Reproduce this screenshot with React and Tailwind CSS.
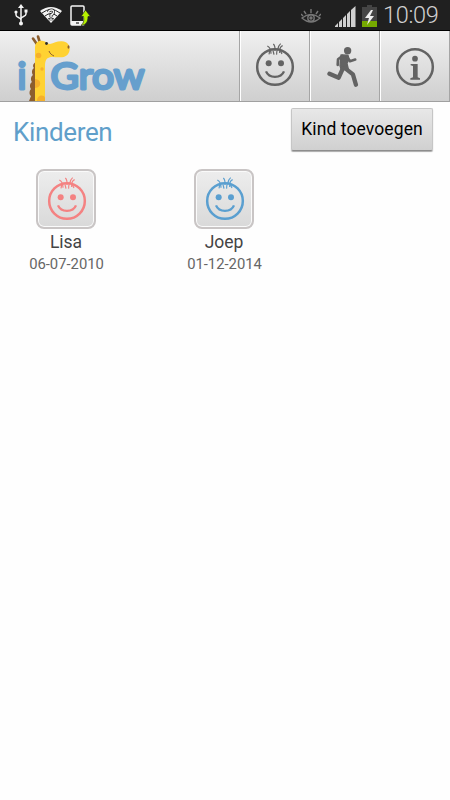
const children = [
  { name: 'Lisa', birthday: '06-07-2010', color: 'text-[#f48282]' },
  { name: 'Joep', birthday: '01-12-2014', color: 'text-[#5a9fd0]' },
];

const SmileyIcon = ({ className }) => (
  <svg viewBox="0 0 120 132" fill="none" stroke="currentColor" className={className}>
    <circle cx="60" cy="72" r="53.5" strokeWidth="7.5" />
    <circle cx="41" cy="61" r="9" fill="currentColor" stroke="none" />
    <circle cx="78" cy="61" r="9" fill="currentColor" stroke="none" />
    <path d="M33 85C42 107 78 107 87 85" strokeWidth="7" />
    <path
      d="M37 9C45 13 48 18 48 32M55 3C60 8 61 12 60 24M77 2C71 7 69 12 68 20M83 8C75 11 73 16 74 30M44 24C43 28 43 30 42 34M54 22C55 27 56 30 57 35M67 20C65 26 64 30 65 35M77 22C78 27 79 30 81 33"
      strokeWidth="3.5"
    />
  </svg>
);

const RunnerIcon = () => (
  <svg viewBox="0 0 96 124" fill="none" stroke="currentColor" strokeLinecap="round" strokeLinejoin="round" className="mr-1 h-[41px] w-8">
    <circle cx="62" cy="14" r="11" fill="currentColor" stroke="none" />
    <path d="M42 27L63 28L66 39L60 53L64 69L43 73L39 60Z" fill="currentColor" strokeWidth="4" />
    <path d="M47 30L33 40L32 57" strokeWidth="8" />
    <path d="M61 34L69 46L85 41" strokeWidth="8" />
    <path d="M47 69L35 96L7 84" strokeWidth="13" />
    <path d="M54 67L78 86L87 117" strokeWidth="13" />
  </svg>
);

const InfoIcon = () => (
  <svg viewBox="0 0 120 120" fill="none" stroke="currentColor" className="mt-0.5 size-10">
    <circle cx="60" cy="60" r="53.5" strokeWidth="7.5" />
    <circle cx="60" cy="35" r="8.5" fill="currentColor" stroke="none" />
    <path d="M47 51H68V91L75 94V98H46V94L54 91V57L47 55Z" fill="currentColor" stroke="none" />
  </svg>
);

const Logo = () => (
  <svg viewBox="0 0 160 70" className="h-[70px] w-40 shrink-0">
    {/* mane */}
    <path d="M36 31C32 33 33 36 34 37C31 39 32 43 33 44C30 46 31 50 32 51C29 53 30 57 31 58C29 60 29 64 31 65L29 70H40V31Z" fill="#8c5e2e" />
    {/* horns */}
    <path d="M33 7.5L37.5 14M38 5.5L40 12" stroke="#8c5e2e" strokeWidth="2.6" strokeLinecap="round" />
    {/* head and neck */}
    <path d="M35 70V17C35 11 39 9 43 10C46 10 47 13 50 13C54 12 57 10 61.5 10.2C67 10 70 14 69.7 18.7C69 24 65 26.5 60 26.3C55 26.5 53 25.5 50 26.2C46 27 45 30 45 36V70Z" fill="#ffd232" />
    <circle cx="38.5" cy="24.5" r="2.8" fill="#f5b02c" />
    <circle cx="42" cy="38" r="1.7" fill="#f5b02c" />
    <path d="M35 48C42 48 42 57 35 57ZM37 70C37 64 44 63 45 67V70Z" fill="#f5b02c" />
    <circle cx="46.5" cy="12.5" r="1.4" fill="#2b2b2b" />
    <ellipse cx="68.5" cy="16" rx="1" ry="1.7" fill="#8c5e2e" />
    <path d="M49 20C50 23 52 24 54 25" fill="none" stroke="#8c5e2e" strokeWidth="1" />
    <g fill="#669fcd" stroke="#669fcd" strokeLinejoin="round" strokeLinecap="round" fontFamily="Lato, sans-serif" fontWeight="400">
      <text x="17.5" y="57.5" fontSize="37" strokeWidth="2.8">i</text>
      <text x="50.5" y="57.5" fontSize="37" strokeWidth="2.8" textLength="94" lengthAdjust="spacingAndGlyphs">Grow</text>
    </g>
  </svg>
);

const StatusBar = () => (
  <div className="flex h-[31px] items-center border-b border-black bg-[#202020] pr-[11px] pl-3.5 text-[#d0d0d0]">
    {/* usb */}
    <svg viewBox="0 0 14 22" fill="none" stroke="#f4f4f4" strokeWidth="1.5" className="h-[22px] w-3.5">
      <path d="M7 3V19M2 8V11C2 14 7 13 7 16M12 7V10C12 13 7 12 7 15" />
      <path d="M7 0L10 4H4Z" fill="#f4f4f4" stroke="none" />
      <circle cx="7" cy="19.5" r="2" fill="#f4f4f4" stroke="none" />
      <circle cx="2" cy="8" r="1.6" fill="#f4f4f4" stroke="none" />
      <path d="M10.5 5.5h3v3h-3z" fill="#f4f4f4" stroke="none" />
    </svg>
    {/* wifi */}
    <svg viewBox="0 0 22 18" className="ml-3 h-[18px] w-[22px]">
      <path d="M0 5Q11 -3 22 5L11 17Z" fill="#f4f4f4" />
      <path d="M2 7Q11 0 20 7M5 10Q11 5 17 10M8 13Q11 10.5 14 13" fill="none" stroke="#202020" strokeWidth="1" />
      <path d="M8.5 6Q9 4 11.5 4Q14 4 13.5 6.5Q13 8 11 9V11M11 13V14.5" fill="none" stroke="#202020" strokeWidth="3" />
      <path d="M8.5 6Q9 4 11.5 4Q14 4 13.5 6.5Q13 8 11 9V11M11 13V14.5" fill="none" stroke="#f4f4f4" strokeWidth="1.5" />
    </svg>
    {/* phone update */}
    <svg viewBox="0 0 21 21" className="ml-2 h-[21px] w-[21px]">
      <rect x="1" y="1" width="13" height="19" rx="1" fill="none" stroke="#f4f4f4" strokeWidth="1.5" />
      <path d="M1 16H14V20H1Z" fill="#f4f4f4" />
      <path d="M6 18H9" stroke="#202020" strokeWidth="1.2" />
      <path d="M15.5 5L20.5 11.5H18C18 17 16 20 11 20.5C14 18 14 15 13.5 11.5H11Z" fill="#b4f000" stroke="#202020" strokeWidth=".7" />
    </svg>
    {/* smart stay */}
    <svg viewBox="0 0 20 16" fill="none" stroke="#777" strokeWidth="1.4" className="mt-1 ml-auto h-4 w-5">
      <path d="M1 9Q10 2 19 9Q10 17 1 9ZM10 4V0M5 5L3 2M15 5L17 2M2 7L0 5M18 7L20 5" />
      <circle cx="10" cy="9" r="3.2" />
      <circle cx="10" cy="9" r="1" fill="#777" />
    </svg>
    {/* signal */}
    <svg viewBox="0 0 21 21" fill="#d0d0d0" className="mt-0.5 ml-3.5 size-[21px]">
      <path d="M0 21V20L3 17V21ZM4 21V16L7 13V21ZM8 21V12L11 9V21ZM12 21V8L15 5V21ZM16 21V4L20.5 0V21Z" />
    </svg>
    {/* battery */}
    <svg viewBox="0 0 15 22" className="mt-0.5 ml-1.5 h-[22px] w-[15px]">
      <path d="M5 0H10V2H15V22H0V2H5Z" fill="#454545" />
      <path d="M0 16H15V22H0Z" fill="#76a900" />
      <path d="M9 5L3 13H7L5 20L12 11H8L11 5Z" fill="#eee" />
    </svg>
    <span className="mt-0.5 ml-[6px] w-[56px] text-[23.5px] leading-none font-light tracking-[-0.3px] whitespace-nowrap">10:09</span>
  </div>
);

const NavButton = ({ children }) => (
  <button className="flex h-full w-[70px] items-center justify-center border-r border-l border-r-[#a5a5a5] border-l-white text-[#636363]">
    {children}
  </button>
);

const Child = ({ name, birthday, color }) => (
  <div className="flex w-[158px] flex-col items-center">
    <button className="flex size-[60px] items-center justify-center rounded-lg border-2 border-[#c9c5c5] bg-linear-to-b from-[#ededed] to-[#d9d9d9] shadow-[inset_0_0_0_1px_#fafafa]">
      <SmileyIcon className={`ml-px h-11 w-10 ${color}`} />
    </button>
    <span className="mt-px text-[17.5px] leading-6 text-[#444]">{name}</span>
    <span className="ml-px text-[14.8px] leading-5 text-[#666]">{birthday}</span>
  </div>
);

const App = () => {
  return (
    <div className="h-[800px] w-[450px] overflow-hidden bg-[#fefefe] font-[Roboto,sans-serif]">
      <StatusBar />
      <header className="flex h-[71px] justify-between border-b border-[#a0a0a0] bg-linear-to-b from-[#f0f0f0] to-[#cfcfcf]">
        <Logo />
        <nav className="flex border-l border-[#a5a5a5]">
          <NavButton>
            <SmileyIcon className="mb-0.5 h-11 w-10" />
          </NavButton>
          <NavButton>
            <RunnerIcon />
          </NavButton>
          <NavButton>
            <InfoIcon />
          </NavButton>
        </nav>
      </header>
      <main>
        <div className="flex items-start justify-between pt-1.5 pr-[17px] pl-[13px]">
          <h1 className="pt-2 text-[26px] leading-8 tracking-[-0.35px] text-[#609fca]">Kinderen</h1>
          <button className="h-[43px] w-[142px] rounded-xs border border-[#c6c6c6] border-b-[#8d8d8d] bg-linear-to-b from-[#e8e8e8] to-[#d0d0d0] text-[17.5px] tracking-[0.1px] text-black shadow-[0_1px_1px_#aaa]">
            Kind toevoegen
          </button>
        </div>
        <div className="-ml-[13px] flex pt-[18px]">
          {children.map((child) => (
            <Child key={child.name} {...child} />
          ))}
        </div>
      </main>
    </div>
  );
};

export default App;
